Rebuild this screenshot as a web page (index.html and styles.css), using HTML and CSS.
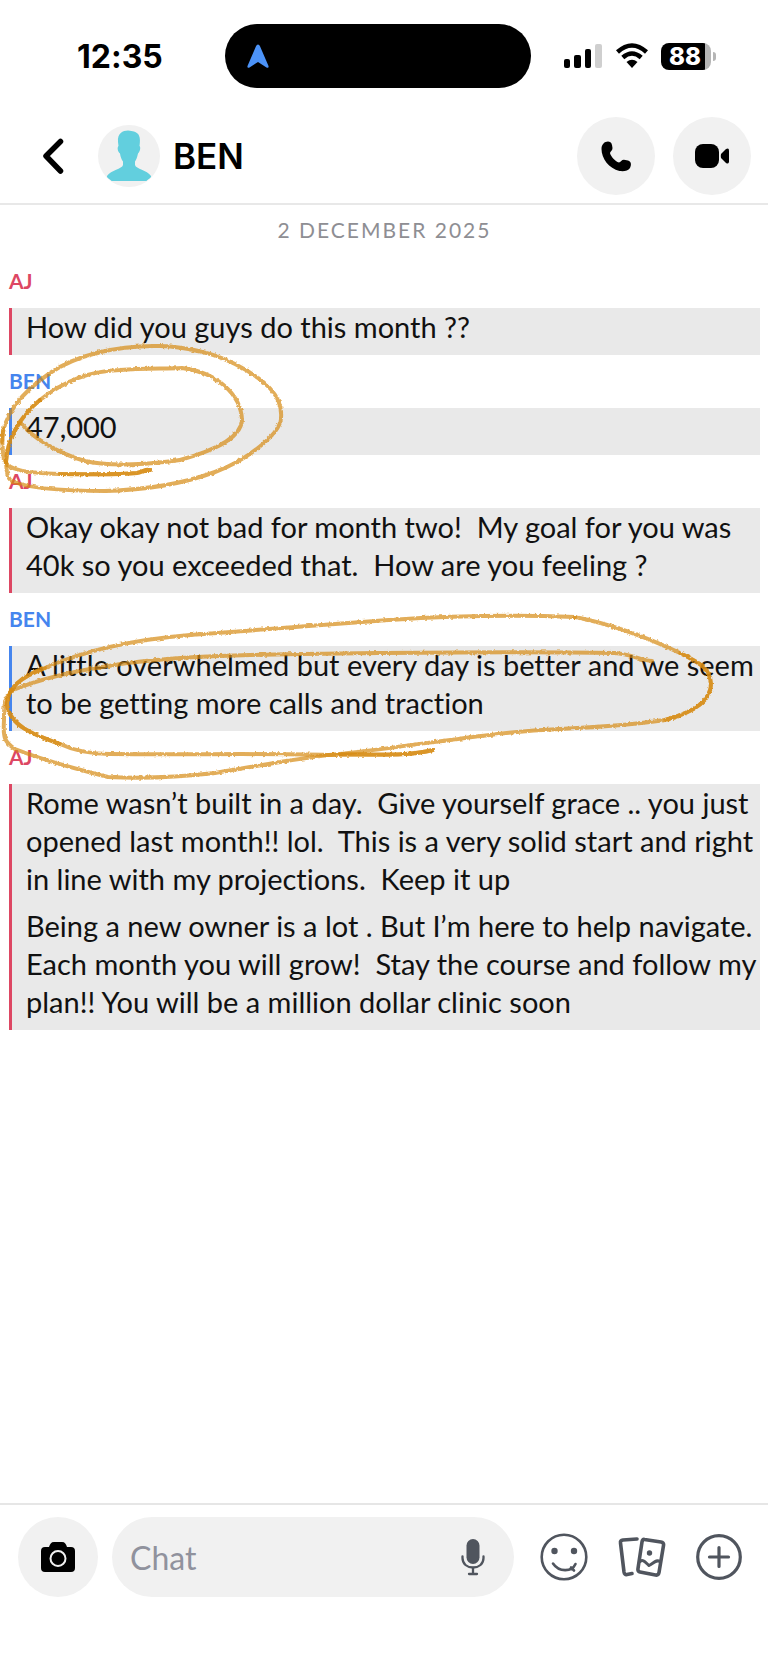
FILE: index.html
```html
<!DOCTYPE html>
<html lang="en">
<head>
    <meta charset="UTF-8">
    <meta name="viewport" content="width=device-width, initial-scale=1.0">
    <title>Chat with BEN</title>
    <link rel="stylesheet" href="styles.css">
</head>
<body>
    <!-- Status bar -->
    <div class="status-bar">
        <div class="status-time">12:35</div>
        <div class="island">
            <svg width="24" height="26" viewBox="0 0 24 26"><path d="M12 1.5 Q13.300 1.500 14 3.200 L22.500 23 Q23 25.500 20.500 24.500 L12 19 L3.500 24.500 Q1 25.500 1.500 23 L10 3.200 Q10.700 1.500 12 1.500Z" fill="#4c93f8"/></svg>
        </div>
        <div class="status-icons">
            <svg width="40" height="26" viewBox="0 0 40 26">
                <rect x="1" y="16" width="6" height="9" rx="2"/>
                <rect x="11" y="12" width="7" height="13" rx="2"/>
                <rect x="22" y="6" width="6" height="19" rx="2"/>
                <rect x="32" y="1" width="7" height="24" rx="2" fill="#cfcfcf"/>
            </svg>
            <svg width="34" height="26" viewBox="0 0 34 26">
                <path d="M2.500 9 Q17 -4 31.500 9" fill="none" stroke="#000" stroke-width="4.500"/>
                <path d="M7.800 14.500 Q17 6.500 26.200 14.500" fill="none" stroke="#000" stroke-width="4.500"/>
                <path d="M11.500 19 Q17 14.500 22.500 19 L17 25Z"/>
            </svg>
            <div class="battery"><span class="battery-level">88</span></div>
        </div>
    </div>

    <!-- Chat header -->
    <header class="header">
        <button class="back" aria-label="Back">
            <svg width="24" height="38" viewBox="0 0 24 38"><path d="M20.500 4.500 L6 19 L20.500 34" fill="none" stroke="#000" stroke-width="5.500" stroke-linecap="round" stroke-linejoin="round"/></svg>
        </button>
        <svg class="avatar" width="62" height="62" viewBox="0 0 62 62">
            <circle cx="31" cy="31" r="31" fill="#f1f1f1"/>
            <path d="M20 17 C19 8 25 5.500 30 5.500 C33 5.500 34 6.500 36 6.500 C41 8 43 12 41.500 21 C43 22 42 27 40 28.500 C39 33 38 35 37 36.500 V40 C38 44 49 45 53 51 C53.500 53 50 54 48.500 56 H13.500 C12 54 8.500 53 9 51 C13 45 24 44 25 40 V36.500 C23.500 34.500 22.500 32 22 28.500 C19.500 27 19 22 20.500 21Z" fill="#62cfde"/>
        </svg>
        <h1 class="contact">BEN</h1>
        <button class="round-button" aria-label="Voice call">
            <svg width="32" height="32" viewBox="0 0 32 32"><path d="M3.500 3.500 C6 1 11 .500 12 5 L12.500 8 C12.700 10 10.500 11.500 10 13 C10.500 16 15 21.500 19 22.500 C20.500 22 22 19.500 24 19.700 L28 20.500 C31.500 21.500 31.500 25 30 28 C28 31 24 31.500 19.500 31 C9 28.500 1.500 18.500 1.500 9 C1.500 6.500 2 5 3.500 3.500Z"/></svg>
        </button>
        <button class="round-button" aria-label="Video call">
            <svg width="34" height="24" viewBox="0 0 34 24"><rect width="24" height="24" rx="8"/><path d="M26 10 L31 5 Q34 3.500 34 6.500 V17.500 Q34 20.500 31 19 L26 14 Q25.500 12 26 10Z"/></svg>
        </button>
    </header>

    <!-- Messages -->
    <main class="thread">
        <div class="date">2 December 2025</div>

        <h2 class="sender aj">AJ</h2>
        <div class="message aj">
            <p>How did you guys do this month ??</p>
        </div>

        <h2 class="sender ben">BEN</h2>
        <div class="message ben">
            <p>47,000</p>
            <svg class="scribble scribble-small" width="290" height="160" viewBox="0 340 290 160">
                <filter id="rough-small" x="-5%" y="-5%" width="110%" height="110%" color-interpolation-filters="sRGB">
                    <feTurbulence type="fractalNoise" baseFrequency="0.35" numOctaves="2" result="noise"/>
                    <feDisplacementMap in="SourceGraphic" in2="noise" scale="3" xChannelSelector="R" yChannelSelector="G"/>
                </filter>
                <g filter="url(#rough-small)">
                    <path d="M21 423 C32 438 60 454 85 461 C110 467 155 464 180 460 C205 453 241 441 242 420 C241 394 216 372 182 368 C165 369 145 368 120 370 C85 371 60 384 40 400"/>
                    <path d="M40 400 C20 416 7 440 6 462 C7 474 7 480 14 482 C35 490 75 491 105 491 C145 490 185 483 215 472 C245 461 280 435 281 418 C283 396 266 380 235 364 C215 354 190 347 160 346 C115 345 75 356 50 373 C22 392 2 416 2 442"/>
                    <path d="M3 430 C2 438 2 448 4 460 C8 470 25 473 60 474 C90 474 115 475 137 473 C143 472 145 469 150 470"/>
                    <path d="M40 400 C20 416 7 440 6 462"/>
                    <path d="M60 474 C90 474 115 475 137 473 C143 472 145 469 150 470"/>
                </g>
            </svg>
        </div>

        <h2 class="sender aj">AJ</h2>
        <div class="message aj">
            <p>Okay okay not bad for month two!&nbsp; My goal for you was 40k so you exceeded that.&nbsp; How are you feeling ?</p>
        </div>

        <h2 class="sender ben">BEN</h2>
        <div class="message ben">
            <p>A little overwhelmed but every day is better and we seem to be getting more calls and traction</p>
            <svg class="scribble scribble-wide" width="720" height="180" viewBox="0 610 720 180">
                <filter id="rough-wide" x="-5%" y="-5%" width="110%" height="110%" color-interpolation-filters="sRGB">
                    <feTurbulence type="fractalNoise" baseFrequency="0.35" numOctaves="2" result="noise"/>
                    <feDisplacementMap in="SourceGraphic" in2="noise" scale="3" xChannelSelector="R" yChannelSelector="G"/>
                </filter>
                <g filter="url(#rough-wide)">
                    <path d="M652 661 C640 660 630 654 615 653 C500 651 400 653 300 654 C220 655 150 659 115 665 C80 670 40 679 13 690"/>
                    <path d="M13 690 C4 696 4 705 4 720 C3 737 4 742 15 749 C40 759 80 770 108 777 C150 779 180 777 215 773 C270 764 310 756 340 754 C430 744 490 732 560 729 C600 727 640 724 665 720 C695 712 711 700 711 684 C710 668 700 663 680 653 C640 634 610 624 575 617"/>
                    <path d="M575 617 C520 615 450 616 390 620 C320 625 250 631 190 635 C130 640 85 650 45 668 C20 677 8 688 7 704 C9 726 35 735 60 744 C75 751 90 754 110 754 C190 755 260 753 330 755 C370 754 405 757 433 750"/>
                    <path d="M45 668 C20 677 8 688 7 704 C9 726 35 735 60 744"/>
                    <path d="M665 720 C695 712 711 700 711 684 C710 668 700 663 680 653"/>
                    <path d="M340 754 C370 754 405 757 433 750"/>
                </g>
            </svg>
        </div>

        <h2 class="sender aj">AJ</h2>
        <div class="message aj">
            <p>Rome wasn’t built in a day.&nbsp; Give yourself grace .. you just opened last month!! lol.&nbsp; This is a very solid start and right in line with my projections.&nbsp; Keep it up</p>
            <p>Being a new owner is a lot . But I’m here to help navigate. Each month you will grow!&nbsp; Stay the course and follow my plan!! You will be a million dollar clinic soon</p>
        </div>
    </main>

    <!-- Composer -->
    <footer class="composer">
        <button class="round-button camera" aria-label="Camera">
            <svg width="34" height="30" viewBox="0 0 34 30"><path d="M4 5 H8 C9 2 10 0 13 0 H21 C24 0 25 2 26 5 H30 Q34 5 34 9 V26 Q34 30 30 30 H4 Q0 30 0 26 V9 Q0 5 4 5Z"/><circle cx="17" cy="16.500" r="7.500" fill="none" stroke="#f1f1f1" stroke-width="2"/></svg>
        </button>
        <div class="chat-box">
            <input class="chat-input" type="text" placeholder="Chat" aria-label="Chat">
            <button class="icon-button" aria-label="Record voice note">
                <svg width="24" height="38" viewBox="0 0 24 38" fill="none" stroke="#50555e" stroke-linecap="round"><rect x="5.500" y="1" width="13" height="25" rx="6.500" fill="#50555e" stroke="none"/><path d="M1.500 18.500 V20 C1.500 26 6 29.500 12 29.500 S22.500 26 22.500 20 V18.500" stroke-width="2.300"/><path d="M12 30 V36 M8 36 H16" stroke-width="2.300"/></svg>
            </button>
        </div>
        <button class="icon-button" aria-label="Stickers">
            <svg width="48" height="48" viewBox="0 0 48 48" fill="none" stroke="#50555e" stroke-width="2.600" stroke-linecap="round"><circle cx="24" cy="24" r="22.300"/><circle cx="14.500" cy="18" r="3.200" fill="#50555e" stroke="none"/><circle cx="34" cy="18" r="3.200" fill="#50555e" stroke="none"/><path d="M13 30.500 C19 39.500 32 39 35.500 31 M31 34.500 L34 37.500"/></svg>
        </button>
        <button class="icon-button" aria-label="Memories">
            <svg width="48" height="42" viewBox="0 0 48 42" fill="none" stroke="#50555e" stroke-width="3.600" stroke-linecap="round" stroke-linejoin="round"><path d="M19 3 L5 4 Q2 4.500 2.500 7 L6 36 Q6.500 39 9 38.500 L14 37.500"/><path d="M26.500 3.500 L43 6 Q46 6.500 45.500 9.500 L41 36.500 Q40.500 39.500 37.500 39 L22 36 Q19.500 35.500 20 32.500 L24 6 Q24.500 3 26.500 3.500Z"/><path d="M22 25.500 C25 23 27 26 31 29.500 C36 27 38 23 42 25.500" stroke-width="3"/><circle cx="31.500" cy="17" r="2.700" fill="#50555e" stroke="none"/></svg>
        </button>
        <button class="icon-button" aria-label="More">
            <svg width="46" height="46" viewBox="0 0 46 46" fill="none" stroke="#50555e" stroke-width="3.200" stroke-linecap="round"><circle cx="23" cy="23" r="21.300"/><path d="M23 13.500 V32.500 M13.500 23 H32.500"/></svg>
        </button>
    </footer>
</body>
</html>
```
FILE: styles.css
```css
/* General Styles */
* {
    box-sizing: border-box;
}
body {
    margin: 0;
    min-height: 100vh;
    display: flex;
    flex-direction: column;
    font-family: Lato, sans-serif;
    font-variant-ligatures: none;
    background: #fff;
    color: #111;
}
button {
    border: none;
    padding: 0;
    background: none;
    cursor: pointer;
}
svg {
    display: block;
}
h1, h2, p {
    margin: 0;
}

/* Status Bar */
.status-bar {
    display: grid;
    grid-template-columns: 1fr 306px 1fr;
    align-items: center;
    padding: 24px 12px 0 0;
    font-family: Inter, sans-serif;
    color: #000;
}
.status-time {
    padding-left: 77px;
    font-size: 32px;
    font-weight: 700;
}
.island {
    display: flex;
    align-items: center;
    height: 64px;
    padding-left: 21px;
    border-radius: 32px;
    background: #000;
}
.status-icons {
    display: flex;
    align-items: center;
    gap: 12px;
    padding-left: 32px;
}
.battery {
    position: relative;
    width: 50px;
    height: 27px;
    border-radius: 8px;
    background: linear-gradient(to right, #000 44px, #b5b5b5 44px);
}
.battery::after {
    content: "";
    position: absolute;
    left: 52px;
    top: 9px;
    width: 3px;
    height: 9px;
    border-radius: 0 4px 4px 0;
    background: #b5b5b5;
}
.battery-level {
    display: block;
    padding-left: 8px;
    font-size: 24px;
    font-weight: 800;
    line-height: 27px;
    color: #fff;
}

/* Chat Header */
.header {
    display: flex;
    align-items: center;
    gap: 18px;
    padding: 29px 17px 8px 40px;
    border-bottom: 2px solid #e8e8e8;
}
.back {
    margin-right: 16px;
}
.avatar {
    margin-right: -5px;
}
.contact {
    flex: 1;
    font-family: Inter, sans-serif;
    font-size: 35px;
    font-weight: 600;
    color: #000;
}
.round-button {
    display: flex;
    flex-shrink: 0;
    align-items: center;
    justify-content: center;
    width: 78px;
    height: 78px;
    border-radius: 50%;
    background: #f1f1f1;
}

/* Thread */
.thread {
    flex: 1;
    padding: 0 8px 0 9px;
}
.date {
    height: 50px;
    line-height: 50px;
    text-align: center;
    text-transform: uppercase;
    font-size: 21px;
    letter-spacing: 2px;
    color: #8e8e93;
}
.sender {
    height: 53px;
    line-height: 51px;
    font-size: 21px;
    font-weight: 700;
}
.sender.aj {
    color: #dd4763;
}
.sender.ben {
    color: #4585ee;
}
.message {
    position: relative;
    padding-left: 14px;
    border-left: 3px solid;
    background: #e9e9e9;
}
.message.aj {
    border-color: #dd4763;
}
.message.ben {
    border-color: #4585ee;
}
.message p {
    padding-bottom: 9px;
    font-size: 29px;
    line-height: 38px;
}

/* Hand-drawn circles over the messages */
.scribble {
    position: absolute;
    left: -12px;
    fill: none;
    stroke: #d58a12;
    stroke-width: 4px;
    stroke-linecap: round;
    pointer-events: none;
    z-index: 1;
}
.scribble path {
    opacity: 0.7;
}
.scribble-small {
    top: -68px;
}
.scribble-wide {
    top: -36px;
}

/* Composer */
.composer {
    display: flex;
    align-items: center;
    gap: 30px;
    padding: 12px 26px 72px 18px;
    border-top: 2px solid #e6e6e6;
}
.camera {
    width: 80px;
    height: 80px;
    margin-right: -16px;
}
.chat-box {
    flex: 1;
    min-width: 0;
    display: flex;
    align-items: center;
    height: 80px;
    margin-right: -4px;
    padding: 0 29px 0 18px;
    border-radius: 40px;
    background: #f1f1f1;
}
.chat-input {
    flex: 1;
    min-width: 0;
    padding: 0;
    border: none;
    outline: none;
    background: transparent;
    font-family: Lato, sans-serif;
    font-size: 32px;
    color: #111;
}
.chat-input::placeholder {
    color: #90929d;
}
```
